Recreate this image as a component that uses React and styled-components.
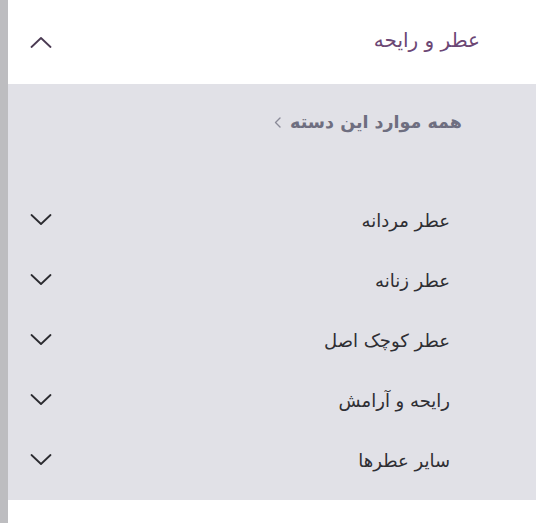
import React from "react";
import styled, { createGlobalStyle } from "styled-components";

const GlobalStyle = createGlobalStyle`
  html, body {
    margin: 0;
    padding: 0;
    background: #ffffff;
  }
  body {
    font-family: "DejaVu Sans", "Noto Sans", sans-serif;
  }
`;

const Page = styled.div`
  min-height: 523px;
  border-left: 8px solid #bdbdc0;
  box-sizing: border-box;
  direction: rtl;
`;

const Header = styled.div`
  height: 84px;
  display: flex;
  align-items: center;
  justify-content: space-between;
  padding: 0 56px 0 22px;
  background: #ffffff;
`;

const Title = styled.span`
  font-size: 20px;
  color: #6c4775;
  line-height: 1;
  margin-top: -4px;
`;

const Panel = styled.div`
  background: #e1e1e7;
  height: 416px;
  box-sizing: border-box;
  padding-bottom: 12px;
`;

const AllLink = styled.a`
  height: 76px;
  margin-bottom: 30px;
  display: flex;
  align-items: center;
  gap: 9px;
  padding-right: 74px;
  font-size: 17.5px;
  font-weight: bold;
  color: #6e6e80;
  text-decoration: none;
`;

const List = styled.ul`
  list-style: none;
  margin: 0;
  padding: 0;
`;

const Item = styled.li`
  height: 60px;
  display: flex;
  align-items: center;
  justify-content: space-between;
  padding: 0 86px 0 22px;
  font-size: 18px;
  color: #2e2e33;
`;

const Label = styled.span`
  margin-top: 0;
`;

const Chevron = ({ up, color = "#2b2b30" }) => (
  <svg width="22" height="12" viewBox="0 0 22 12" fill="none">
    <path
      d={up ? "M1.5 11 L11 2 L20.5 11" : "M1.5 1 L11 10 L20.5 1"}
      stroke={color}
      strokeWidth="1.8"
      strokeLinecap="round"
      strokeLinejoin="round"
    />
  </svg>
);

const SmallArrow = () => (
  <svg width="7" height="11" viewBox="0 0 7 11" fill="none">
    <path
      d="M6 1 L1.5 5.5 L6 10"
      stroke="#8a8a98"
      strokeWidth="1.4"
      strokeLinecap="round"
      strokeLinejoin="round"
    />
  </svg>
);

const items = ["عطر مردانه", "عطر زنانه", "عطر کوچک اصل", "رایحه و آرامش", "سایر عطرها"];

export default function App() {
  return (
    <>
      <GlobalStyle />
      <Page>
        <Header>
          <Title>عطر و رایحه</Title>
          <Chevron up color="#4a3a52" />
        </Header>
        <Panel>
          <AllLink href="#">
            همه موارد این دسته
            <SmallArrow />
          </AllLink>
          <List>
            {items.map((t) => (
              <Item key={t}>
                <Label>{t}</Label>
                <Chevron />
              </Item>
            ))}
          </List>
        </Panel>
      </Page>
    </>
  );
}
